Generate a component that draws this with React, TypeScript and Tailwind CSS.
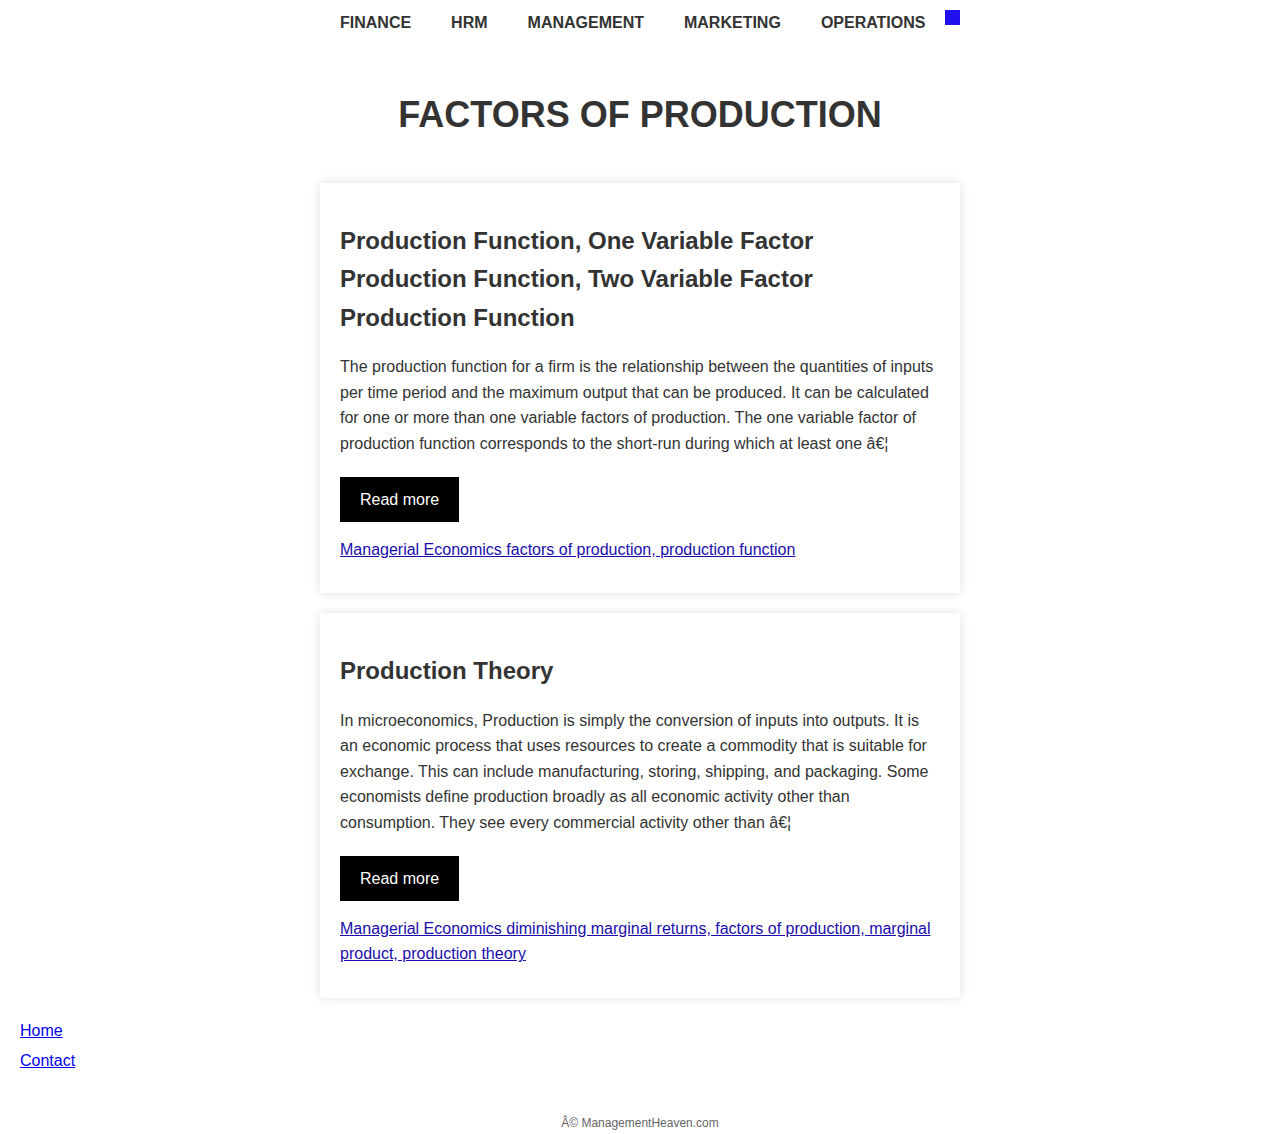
import React from 'react';

const navItems = ['FINANCE', 'HRM', 'MANAGEMENT', 'MARKETING', 'OPERATIONS'];

interface Post {
  title: string[];
  excerpt: string;
  tags: string;
}

const posts: Post[] = [
  {
    title: [
      'Production Function, One Variable Factor',
      'Production Function, Two Variable Factor',
      'Production Function',
    ],
    excerpt:
      'The production function for a firm is the relationship between the quantities of inputs per time period and the maximum output that can be produced. It can be calculated for one or more than one variable factors of production. The one variable factor of production function corresponds to the short-run during which at least one â€¦',
    tags: 'Managerial Economics factors of production, production function',
  },
  {
    title: ['Production Theory'],
    excerpt:
      'In microeconomics, Production is simply the conversion of inputs into outputs. It is an economic process that uses resources to create a commodity that is suitable for exchange. This can include manufacturing, storing, shipping, and packaging. Some economists define production broadly as all economic activity other than consumption. They see every commercial activity other than â€¦',
    tags: 'Managerial Economics diminishing marginal returns, factors of production, marginal product, production theory',
  },
];

const PostCard: React.FC<{ post: Post }> = ({ post }) => (
  <article className="bg-white px-5 pt-5 pb-[31px] shadow-[0_0_10px_rgba(0,0,0,0.12)]">
    <h2 className="mt-[19px] text-[24px] font-bold leading-[38.4px] text-[#333]">
      {post.title.map((t) => (
        <div key={t}>{t}</div>
      ))}
    </h2>
    <p className="mt-[17px] text-[16px] leading-[25.6px] text-[#333]">{post.excerpt}</p>
    <a
      href="#"
      className="mt-[20px] inline-block bg-black px-5 py-[10px] text-[16px] leading-[25px] text-white"
    >
      Read more
    </a>
    <p className="mt-[15px] text-[16px] leading-[25.6px]">
      <a href="#" className="text-[#1a0dab] underline">
        {post.tags}
      </a>
    </p>
  </article>
);

export default function App() {
  return (
    <div className="min-h-[1134px] bg-white font-['Liberation_Sans',Arial,sans-serif] text-[#333]">
      <nav className="mx-auto flex h-[44px] w-[640px] items-start">
        {navItems.map((item) => (
          <a key={item} href="#" className="px-5 pt-[13px] text-[16px] font-bold leading-[20px] text-[#333]">
            {item}
          </a>
        ))}
        <span className="mt-[10px] block h-[15px] w-[15px] bg-[#2010f0]" />
      </nav>

      <main className="mx-auto w-[640px]">
        <h1 className="mt-[49px] text-center text-[36px] font-bold leading-[43px] text-[#333]">
          FACTORS OF PRODUCTION
        </h1>
        <div className="mt-[47px] flex flex-col gap-5">
          {posts.map((p) => (
            <PostCard key={p.title[0]} post={p} />
          ))}
        </div>
      </main>

      <footer className="px-5 pt-[24px]">
        <ul className="flex flex-col gap-[12px] text-[16px] leading-[18px]">
          <li>
            <a href="#" className="text-[#0000ee] underline">Home</a>
          </li>
          <li>
            <a href="#" className="text-[#0000ee] underline">Contact</a>
          </li>
        </ul>
        <p className="mt-[46px] pb-[4px] text-center text-[12px] leading-[14px] text-[#666]">
          Â© ManagementHeaven.com
        </p>
      </footer>
    </div>
  );
}
